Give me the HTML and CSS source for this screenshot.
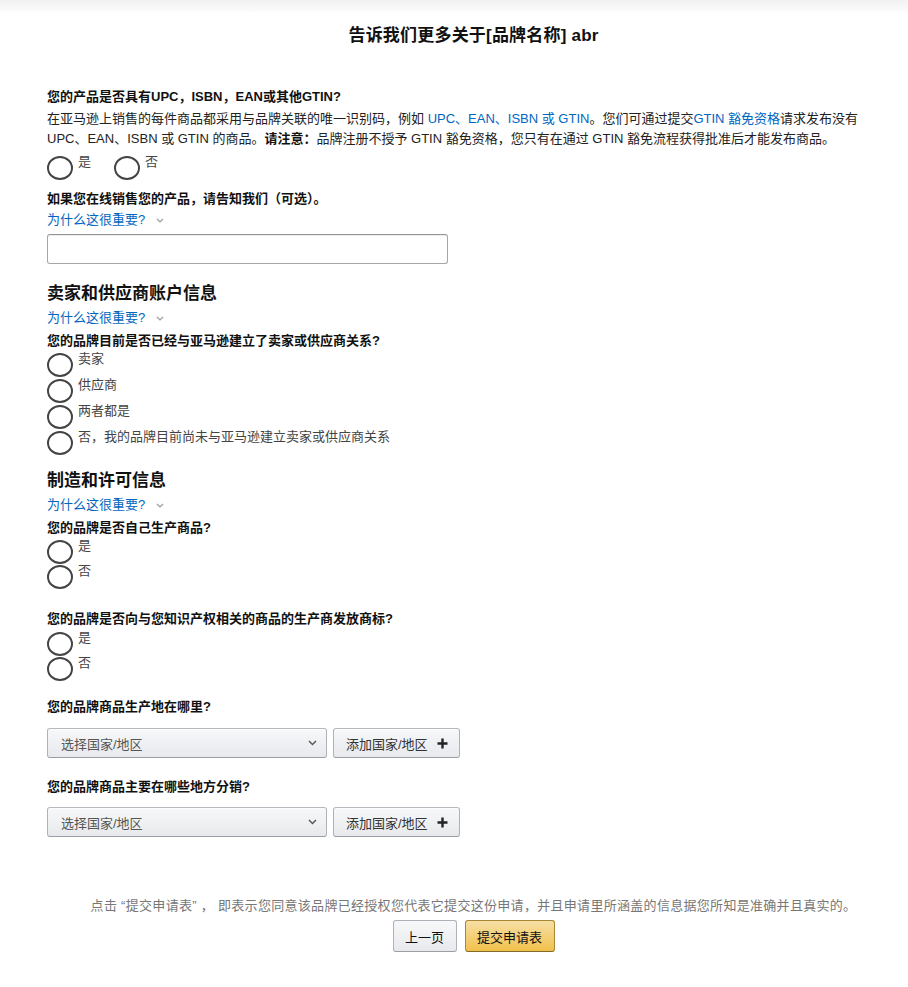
FILE: index.html
```html
<!DOCTYPE html>
<html lang="zh-CN">
<head>
<meta charset="utf-8">
<title>告诉我们更多关于[品牌名称] abr</title>
<link rel="stylesheet" href="styles.css">
</head>
<body>
<div class="topband"></div>
<main class="page">
  <h1 class="title">告诉我们更多关于[品牌名称] abr</h1>

  <div class="q-label q-first">您的产品是否具有UPC，ISBN，EAN或其他GTIN?</div>
  <p class="desc">在亚马逊上销售的每件商品都采用与品牌关联的唯一识别码，例如 <a class="lnk">UPC、EAN、ISBN 或 GTIN</a>。您们可通过提交<a class="lnk">GTIN 豁免资格</a>请求发布没有<br>UPC、EAN、ISBN 或 GTIN 的商品。<b>请注意：</b>品牌注册不授予 GTIN 豁免资格，您只有在通过 GTIN 豁免流程获得批准后才能发布商品。</p>
  <div class="radio-row">
    <label class="radio"><span class="circle"></span><span class="rtext">是</span></label>
    <label class="radio"><span class="circle"></span><span class="rtext">否</span></label>
  </div>

  <div class="q-label q-online">如果您在线销售您的产品，请告知我们（可选）。</div>
  <a class="why">为什么这很重要?<svg class="caret" width="8" height="5" viewBox="0 0 8 5"><path d="M1 1 L4 4 L7 1" fill="none" stroke="#9a9a9a" stroke-width="1.1"/></svg></a>
  <div class="textbox"></div>

  <h2 class="section-title st-first">卖家和供应商账户信息</h2>
  <a class="why">为什么这很重要?<svg class="caret" width="8" height="5" viewBox="0 0 8 5"><path d="M1 1 L4 4 L7 1" fill="none" stroke="#9a9a9a" stroke-width="1.1"/></svg></a>
  <div class="q-label q-after-link">您的品牌目前是否已经与亚马逊建立了卖家或供应商关系?</div>
  <div class="radio-list list-wide">
    <label class="radio"><span class="circle"></span><span class="rtext">卖家</span></label>
    <label class="radio"><span class="circle"></span><span class="rtext">供应商</span></label>
    <label class="radio"><span class="circle"></span><span class="rtext">两者都是</span></label>
    <label class="radio"><span class="circle"></span><span class="rtext">否，我的品牌目前尚未与亚马逊建立卖家或供应商关系</span></label>
  </div>

  <h2 class="section-title st-second">制造和许可信息</h2>
  <a class="why">为什么这很重要?<svg class="caret" width="8" height="5" viewBox="0 0 8 5"><path d="M1 1 L4 4 L7 1" fill="none" stroke="#9a9a9a" stroke-width="1.1"/></svg></a>
  <div class="q-label q-after-link">您的品牌是否自己生产商品?</div>
  <div class="radio-list">
    <label class="radio"><span class="circle"></span><span class="rtext">是</span></label>
    <label class="radio"><span class="circle"></span><span class="rtext">否</span></label>
  </div>

  <div class="q-label q-license">您的品牌是否向与您知识产权相关的商品的生产商发放商标?</div>
  <div class="radio-list list-license">
    <label class="radio"><span class="circle"></span><span class="rtext">是</span></label>
    <label class="radio"><span class="circle"></span><span class="rtext">否</span></label>
  </div>

  <div class="q-label q-where">您的品牌商品生产地在哪里?</div>
  <div class="select-row sr-first">
    <div class="fake-select"><span>选择国家/地区</span><svg width="9" height="6" viewBox="0 0 9 6"><path d="M1 1 L4.5 4.6 L8 1" fill="none" stroke="#555" stroke-width="1.4"/></svg></div>
    <div class="add-btn"><span>添加国家/地区</span><svg width="11" height="11" viewBox="0 0 11 11"><path d="M5.5 0.5 V10.5 M0.5 5.5 H10.5" stroke="#222" stroke-width="2.4"/></svg></div>
  </div>

  <div class="q-label q-dist">您的品牌商品主要在哪些地方分销?</div>
  <div class="select-row sr-second">
    <div class="fake-select"><span>选择国家/地区</span><svg width="9" height="6" viewBox="0 0 9 6"><path d="M1 1 L4.5 4.6 L8 1" fill="none" stroke="#555" stroke-width="1.4"/></svg></div>
    <div class="add-btn"><span>添加国家/地区</span><svg width="11" height="11" viewBox="0 0 11 11"><path d="M5.5 0.5 V10.5 M0.5 5.5 H10.5" stroke="#222" stroke-width="2.4"/></svg></div>
  </div>

  <p class="consent">点击 “提交申请表” ， 即表示您同意该品牌已经授权您代表它提交这份申请，并且申请里所涵盖的信息据您所知是准确并且真实的。</p>
  <div class="actions">
    <button class="btn btn-secondary" type="button">上一页</button>
    <button class="btn btn-primary" type="button">提交申请表</button>
  </div>
</main>
</body>
</html>
```

FILE: styles.css
```css
* { box-sizing: border-box; }
html, body { margin: 0; background: #fff; }
body {
  font-family: "Liberation Sans", "Noto Sans CJK SC", sans-serif;
  font-size: 13px;
  color: #111;
}
.topband {
  height: 12px;
  background: linear-gradient(#f1f1f1, #fcfcfc);
}
.page {
  width: 853px;
  margin-left: 47px;
}
.title {
  margin: 12px 0 0;
  font-size: 17px;
  line-height: 24px;
  font-weight: bold;
  text-align: center;
  color: #111;
  letter-spacing: 0.2px;
}
.q-label {
  font-weight: bold;
  line-height: 18px;
  color: #111;
}
.q-first { margin-top: 40px; }
.q-online { margin-top: 10px; }
.q-after-link { margin-top: 5px; }
.q-license { margin-top: 21px; }
.q-where { margin-top: 17px; }
.q-dist { margin-top: 20px; }

.desc {
  margin: 3px 0 0;
  line-height: 20px;
  color: #222;
  white-space: nowrap;
}
.desc b { font-weight: bold; color: #111; }
.lnk { color: #0066c0; text-decoration: none; }

.radio-row {
  margin-top: 7px;
  display: flex;
  gap: 23px;
}
.radio {
  display: flex;
  align-items: flex-start;
  gap: 5px;
  height: 24px;
}
.circle {
  width: 26px;
  height: 24px;
  border: 2px solid #444;
  border-radius: 50%;
  background: #fff;
  flex: none;
}
.rtext {
  line-height: 12px;
  color: #444;
}
.radio-list {
  margin-top: 3px;
  display: flex;
  flex-direction: column;
  gap: 1px;
}
.list-wide { gap: 2px; }
.list-license { margin-top: 4px; }

.why {
  display: flex;
  align-items: center;
  margin-top: 3px;
  line-height: 18px;
  color: #0066c0;
  text-decoration: none;
}
.caret { margin-left: 11px; }

.textbox {
  margin-top: 5px;
  width: 401px;
  height: 30px;
  border: 1px solid #a6a6a6;
  border-top-color: #949494;
  border-radius: 3px;
  box-shadow: 0 1px 0 rgba(255,255,255,.5), inset 0 1px 0 rgba(0,0,0,.07);
}

.section-title {
  font-size: 17px;
  line-height: 24px;
  font-weight: bold;
  margin: 0;
  color: #111;
}
.st-first { margin-top: 18px; }
.st-second { margin-top: 14px; }

.select-row {
  display: flex;
  gap: 6px;
}
.sr-first { margin-top: 12px; }
.sr-second { margin-top: 11px; }
.fake-select, .add-btn {
  height: 30px;
  display: flex;
  align-items: center;
  border: 1px solid #adb1b8;
  border-top-color: #b5b8bd;
  border-bottom-color: #9a9ea5;
  border-radius: 3px;
  background: linear-gradient(#f7f8fa, #e7e9ec);
  box-shadow: 0 1px 0 rgba(255,255,255,.6) inset;
  color: #555;
}
.fake-select {
  width: 280px;
  padding: 0 9px 0 13px;
  justify-content: space-between;
}
.add-btn {
  width: 127px;
  padding: 0 11px 0 12px;
  justify-content: space-between;
  color: #333;
}

.consent {
  margin: 60px 0 0;
  line-height: 18px;
  text-align: center;
  color: #777;
  letter-spacing: 0.3px;
}
.actions {
  margin-top: 5px;
  display: flex;
  justify-content: center;
  gap: 8px;
}
.btn {
  height: 32px;
  font: inherit;
  border-radius: 3px;
  padding: 0;
  cursor: pointer;
}
.btn-secondary {
  width: 64px;
  border: 1px solid #adb1b8;
  border-bottom-color: #9a9ea5;
  background: linear-gradient(#f7f8fa, #e7e9ec);
  color: #111;
}
.btn-primary {
  width: 90px;
  border: 1px solid #a88734;
  border-bottom-color: #846a29;
  background: linear-gradient(#f7dfa5, #f0c14b);
  color: #111;
}
```
